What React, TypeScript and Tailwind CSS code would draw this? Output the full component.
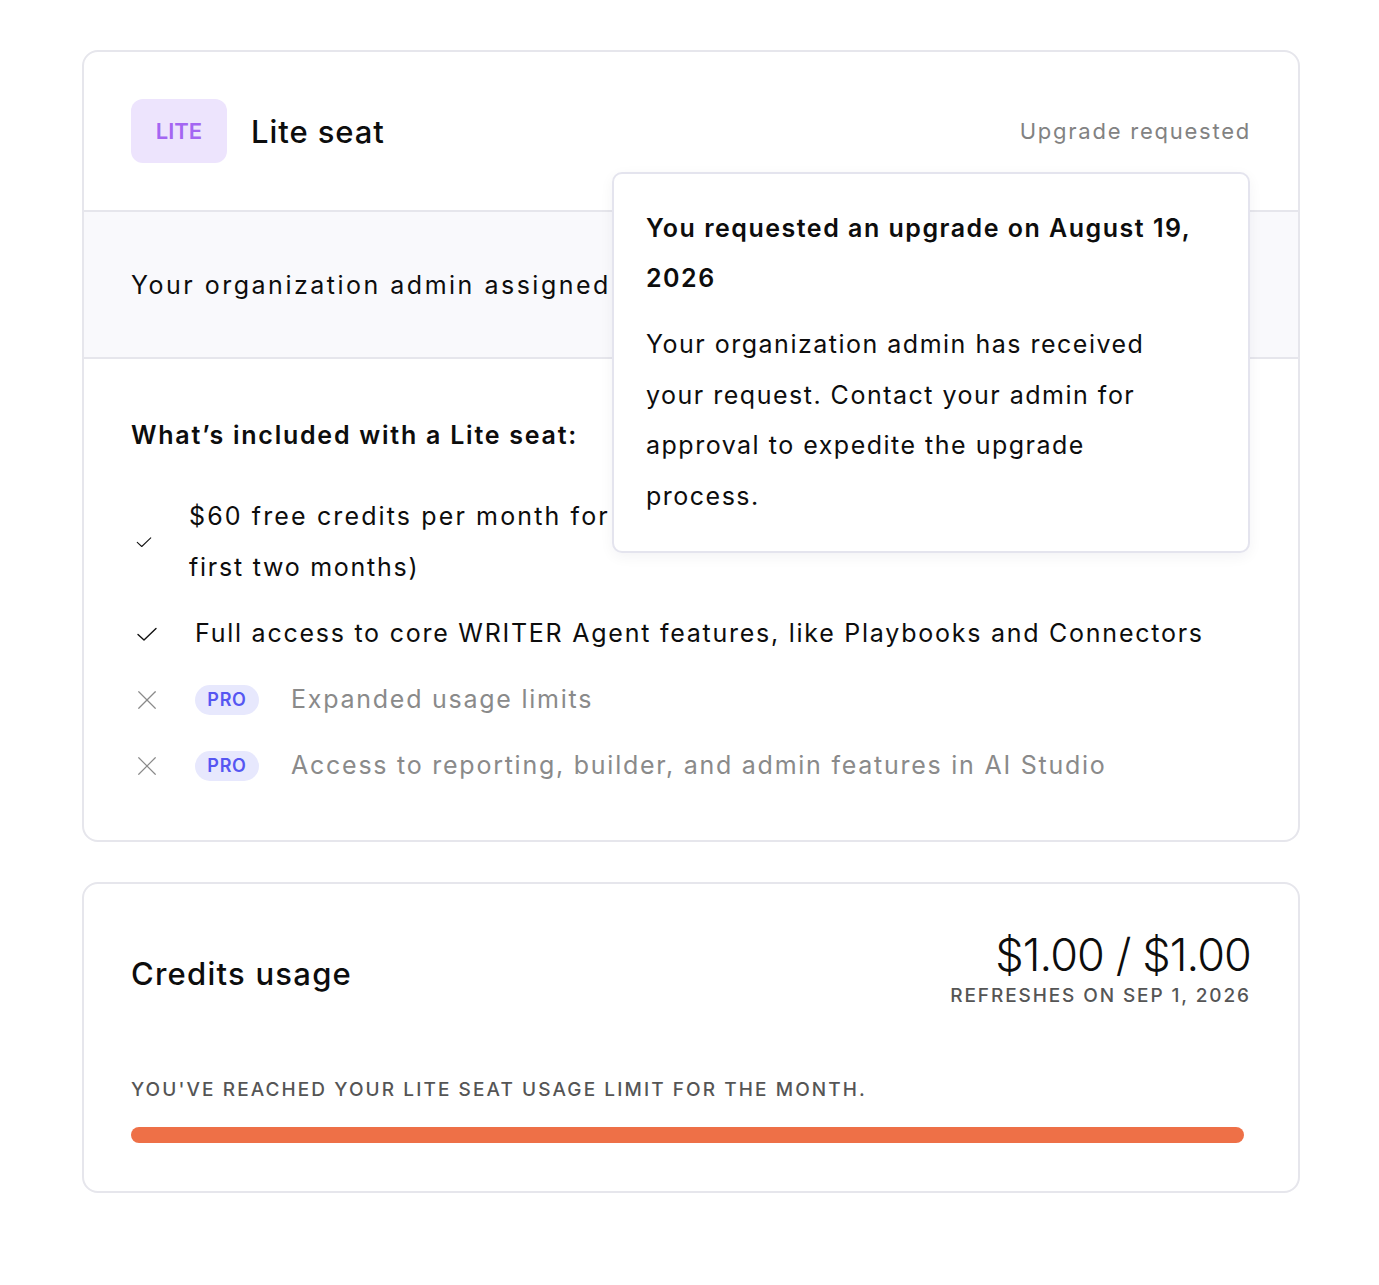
import React from "react";

const font = { fontFamily: "Inter, 'Noto Sans', sans-serif" };

function CheckIcon({ size = 24 }: { size?: number }) {
    return (
        <svg width={size} height={size} viewBox="0 0 24 24" fill="none" stroke="#111" strokeWidth={1.4} strokeLinecap="round" strokeLinejoin="round">
            <polyline points="3,12.5 9,18 21,6.5" />
        </svg>
    );
}

function CrossIcon() {
    return (
        <svg width={22} height={22} viewBox="0 0 24 24" fill="none" stroke="#8a8a8a" strokeWidth={1.3} strokeLinecap="round">
            <line x1="3" y1="3" x2="21" y2="21" />
            <line x1="21" y1="3" x2="3" y2="21" />
        </svg>
    );
}

function ProBadge() {
    return (
        <span className="inline-flex items-center justify-center w-[64px] h-[30px] rounded-full bg-[#e7e8fd] text-[#5656f2] text-[18px] font-semibold tracking-[0.04em]">
            PRO
        </span>
    );
}

export default function App(): React.JSX.Element {
    return (
        <div className="min-h-[1285px] bg-white pt-[50px] pl-[82px] text-[#0d0d0d]" style={font}>
            <div className="w-[1218px] flex flex-col gap-[40px]">
                {/* Seat card */}
                <div className="relative rounded-[16px] border-2 border-[#e6e6ec] bg-white">
                    {/* Header */}
                    <div className="flex items-center justify-between px-[47px] py-[47px] border-b-2 border-[#e6e6ec]">
                        <div className="flex items-center gap-[24px]">
                            <span className="flex items-center justify-center w-[96px] h-[64px] rounded-[12px] bg-[#ede4fd] text-[#a466f2] text-[22px] font-semibold">
                                LITE
                            </span>
                            <span className="text-[31px] font-medium leading-none tracking-[0.03em]">Lite seat</span>
                        </div>
                        <span className="text-[22px] text-[#828282] tracking-[0.08em]">Upgrade requested</span>
                    </div>

                    {/* Assignment info (partly under the tooltip) */}
                    <div className="h-[147px] flex items-center px-[47px] bg-[#f9f9fc] border-b-2 border-[#e6e6ec]">
                        <p className="whitespace-nowrap text-[25px] leading-[36px] tracking-[0.1em]">
                            Your organization admin assigned you a Lite seat.
                        </p>
                    </div>

                    {/* Features */}
                    <div className="px-[47px] pt-[58px] pb-[49px] text-[25px] tracking-[0.07em]">
                        <h3 className="leading-[36px] font-semibold">What’s included with a Lite seat:</h3>
                        <ul className="mt-[38px] flex flex-col gap-[15px]">
                            <li className="flex items-center">
                                <span className="w-[58px] flex items-center pl-[4px]">
                                    <CheckIcon size={18} />
                                </span>
                                <span className="whitespace-nowrap leading-[51px] tracking-[0.085em]">
                                    $60 free credits per month for the
                                    <br />
                                    <span className="tracking-[0.07em]">first two months)</span>
                                </span>
                            </li>
                            <li className="flex items-center">
                                <span className="w-[64px] flex items-center pl-[4px]">
                                    <CheckIcon />
                                </span>
                                <span className="leading-[51px]">
                                    Full access to core WRITER Agent features, like Playbooks and Connectors
                                </span>
                            </li>
                            <li className="flex items-center">
                                <span className="w-[64px] flex items-center pl-[5px]">
                                    <CrossIcon />
                                </span>
                                <ProBadge />
                                <span className="ml-[32px] leading-[51px] text-[#8a8a8a]">Expanded usage limits</span>
                            </li>
                            <li className="flex items-center">
                                <span className="w-[64px] flex items-center pl-[5px]">
                                    <CrossIcon />
                                </span>
                                <ProBadge />
                                <span className="ml-[32px] leading-[51px] text-[#8a8a8a]">
                                    Access to reporting, builder, and admin features in AI Studio
                                </span>
                            </li>
                        </ul>
                    </div>

                    {/* Upgrade tooltip */}
                    <div className="absolute z-10 top-[120px] left-[528px] w-[638px] rounded-[10px] border-2 border-[#e4e4ee] bg-white px-[32px] pt-[29px] pb-[30px] text-[25px] tracking-[0.06em] shadow-[0_4px_14px_rgba(20,20,60,0.05)]">
                        <p className="leading-[50px] font-semibold">
                            You requested an upgrade on August 19,
                            <br />
                            2026
                        </p>
                        <p className="mt-[16px] leading-[50.5px]">
                            Your organization admin has received
                            <br />
                            your request. Contact your admin for
                            <br />
                            approval to expedite the upgrade
                            <br />
                            process.
                        </p>
                    </div>
                </div>

                {/* Credits usage card */}
                <div className="rounded-[16px] border-2 border-[#e6e6ec] bg-white px-[47px] pt-[42px] pb-[48px]">
                    <div className="flex items-center justify-between">
                        <h2 className="text-[31px] font-medium pt-[14px] tracking-[0.04em]">Credits usage</h2>
                        <div className="flex flex-col items-end">
                            <span className="text-[45px] font-light leading-[58px] tracking-[-0.02em]">$1.00 / $1.00</span>
                            <span className="text-[19px] font-medium tracking-[0.1em] text-[#555] leading-[24px]">
                                REFRESHES ON SEP 1, 2026
                            </span>
                        </div>
                    </div>
                    <p className="mt-[70px] text-[19px] font-medium tracking-[0.11em] text-[#555] leading-[24px]">
                        YOU'VE REACHED YOUR LITE SEAT USAGE LIMIT FOR THE MONTH.
                    </p>
                    <div className="mt-[25px] mr-[7px] h-[16px] rounded-full bg-[#ee7047]" />
                </div>
            </div>
        </div>
    );
}
